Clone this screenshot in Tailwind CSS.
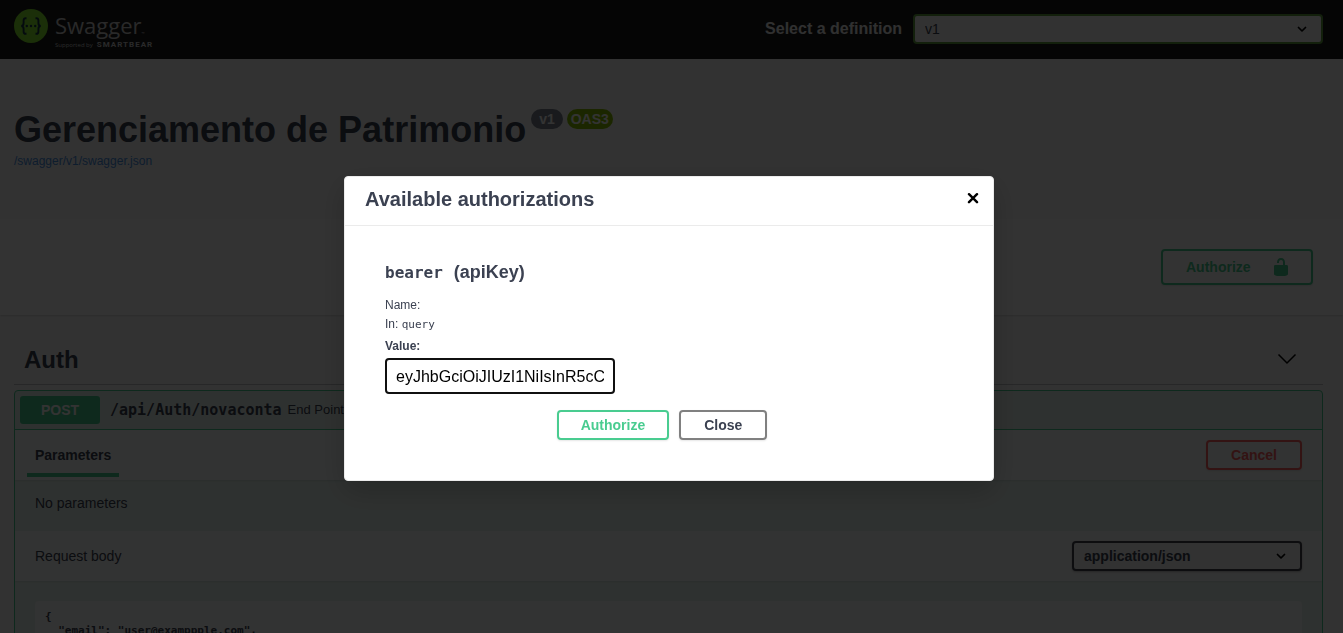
<!DOCTYPE html>
<html lang="pt-BR">
<head>
<meta charset="utf-8">
<meta name="viewport" content="width=device-width, initial-scale=1">
<title>Swagger UI</title>
<script src="https://cdn.jsdelivr.net/npm/@tailwindcss/browser@4"></script>
</head>
<body class="h-screen overflow-hidden bg-[#fafafa] font-['Liberation_Sans',Arial,sans-serif] text-sm text-[#3b4151]">
<div class="flex h-full flex-col overflow-hidden">
  <header class="flex h-[59px] shrink-0 items-center justify-between bg-[#1b1b1b] pr-5 pb-0.5 pl-3.5">
    <a href="#" class="flex items-start gap-[7px]" aria-label="Swagger, supported by SmartBear">
      <svg class="size-[34px]" viewBox="0 0 34 34" fill="none">
        <circle cx="17" cy="17" r="17" fill="#85ea2d"/>
        <path d="M12.5 9.2H11.6C9.8 9.2 9.600 10.4 9.600 11.6V14C9.600 15.8 9 17 7.200 17C9 17 9.600 18.2 9.600 20V22.4C9.600 23.6 9.800 24.8 11.6 24.8H12.5M21.5 9.2H22.4C24.2 9.2 24.4 10.4 24.4 11.6V14C24.4 15.8 25 17 26.8 17C25 17 24.4 18.2 24.4 20V22.4C24.4 23.6 24.2 24.8 22.4 24.8H21.5" stroke="#173647" stroke-width="1.900"/>
        <circle cx="12.8" cy="17" r="1.2" fill="#173647"/><circle cx="17" cy="17" r="1.2" fill="#173647"/><circle cx="21.2" cy="17" r="1.2" fill="#173647"/>
      </svg>
      <span class="flex flex-col font-['Open_Sans',sans-serif] text-[#cccccc]">
        <span class="flex items-end text-[22px] leading-8">Swagger<span class="text-[4px] leading-[14px]">™</span></span>
        <span class="flex items-center gap-1 text-[6px] leading-[8px] whitespace-nowrap"><span>Supported by</span><b class="font-['Roboto',sans-serif] text-[8px] tracking-[1px]">SMARTBEAR</b></span>
      </span>
    </a>
    <div class="flex items-center gap-[11px]">
      <label for="definition" class="text-base font-bold text-[#f0f0f0]">Select a definition</label>
      <div class="relative">
        <select id="definition" class="block h-[30px] w-[410px] appearance-none rounded border-2 border-[#62a03f] bg-[#f7f7f7] px-2.5 text-sm">
          <option>v1</option>
        </select>
        <svg class="pointer-events-none absolute top-1.5 right-3 size-[18px]" viewBox="0 0 20 20"><path stroke="#000" stroke-width=".4" d="M13.418 7.859a.695.695 0 0 1 .978 0 .68.68 0 0 1 0 .969l-3.908 3.83a.697.697 0 0 1-.979 0l-3.908-3.83a.68.68 0 0 1 0-.969.695.695 0 0 1 .978 0L10 11z"/></svg>
      </div>
    </div>
  </header>

  <section class="h-40 shrink-0 px-3.5 pt-[50px]">
    <h1 class="flex items-start gap-[5px] text-[36px] leading-[41px] font-bold">Gerenciamento de Patrimonio
      <span class="flex gap-1 text-sm leading-5 text-white"><span class="rounded-full bg-[#7d8492] px-2">v1</span><span class="rounded-full bg-[#89bf04] px-1">OAS3</span></span>
    </h1>
    <a href="#" class="block text-xs leading-[22px] text-[#4990e2]">/swagger/v1/swagger.json</a>
  </section>

  <section class="flex h-24 shrink-0 items-center justify-end bg-white pr-[30px] shadow-[0_1px_2px_0_rgba(0,0,0,0.15)]">
    <button class="flex h-9 w-[152px] items-center justify-between rounded border-2 border-[#49cc90] pr-5 pl-[23px] font-bold text-[#49cc90] shadow-[0_1px_2px_rgba(0,0,0,0.1)]">Authorize
      <svg class="size-5" viewBox="0 0 20 20" fill="currentColor"><path d="M15.8 8H14V5.6C14 2.703 12.665 1 10 1 7.334 1 6 2.703 6 5.6V6h2v-.801C8 3.754 8.797 3 10 3c1.203 0 2 .754 2 2.199V8H4c-.553 0-1 .646-1 1.199V17c0 .549.428 1.139.951 1.307l1.197.387C5.672 18.861 6.55 19 7.1 19h5.8c.549 0 1.428-.139 1.951-.307l1.196-.387c.524-.167.953-.757.953-1.306V9.199C17 8.646 16.352 8 15.8 8z"/></svg>
    </button>
  </section>

  <main class="flex min-h-0 flex-1 flex-col pt-[21px] pr-5 pl-3.5">
    <h2 class="flex h-[49px] shrink-0 items-center justify-between border-b border-[#3b4151]/30 pr-[26px] pl-2.5 text-2xl font-bold">Auth
      <svg class="size-5" viewBox="0 0 20 20" fill="none" stroke="#000" stroke-width="1.500"><path d="M1.500 4.500L10 13L18.500 4.500"/></svg>
    </h2>
    <article class="mt-[5px] flex h-[400px] shrink-0 flex-col rounded border border-[#49cc90] bg-[#49cc90]/10">
      <div class="flex h-[39px] shrink-0 items-center border-b border-[#49cc90] px-[5px]">
        <span class="flex h-7 w-20 items-center justify-center rounded-[3px] bg-[#49cc90] font-bold text-white">POST</span>
        <span class="ml-2.5 pt-0.5 font-['DejaVu_Sans_Mono',monospace] text-[15px] font-bold">/api/Auth/novaconta</span>
        <span class="ml-1.5 text-[13px] whitespace-nowrap">End Point para cadastrar uma nova conta</span>
      </div>
      <div class="flex h-[50px] shrink-0 items-center justify-between bg-white/80 pr-5 pl-3 shadow-[0_1px_2px_rgba(0,0,0,0.1)]">
        <h3 class="flex h-[47px] items-center self-start border-b-4 border-[#49cc90] px-2 pt-[7px] font-bold">Parameters</h3>
        <button class="h-[30px] w-24 rounded border-2 border-[#ff6060] font-bold text-[#ff6060] shadow-[0_1px_2px_rgba(0,0,0,0.1)]">Cancel</button>
      </div>
      <p class="h-[51px] shrink-0 px-5 pt-[13px] leading-5">No parameters</p>
      <div class="flex h-[50px] shrink-0 items-center justify-between bg-white/80 px-5 shadow-[0_1px_2px_rgba(0,0,0,0.1)]">
        <label for="media">Request body</label>
        <div class="relative">
          <select id="media" class="block h-[30px] w-[230px] appearance-none rounded border-2 border-[#41444e] bg-[#f7f7f7] px-2.5 text-sm font-bold shadow-[0_1px_2px_rgba(0,0,0,0.25)]">
            <option>application/json</option>
          </select>
          <svg class="pointer-events-none absolute top-1.5 right-3 size-[18px]" viewBox="0 0 20 20"><path stroke="#000" stroke-width=".4" d="M13.418 7.859a.695.695 0 0 1 .978 0 .68.68 0 0 1 0 .969l-3.908 3.83a.697.697 0 0 1-.979 0l-3.908-3.83a.68.68 0 0 1 0-.969.695.695 0 0 1 .978 0L10 11z"/></svg>
        </div>
      </div>
      <textarea aria-label="Request body" class="mx-5 mt-5 h-[180px] resize-none rounded bg-white/80 px-2.5 py-[9px] font-['DejaVu_Sans_Mono',monospace] text-[11px] leading-[14px] font-bold">{
  "email": "user@examppple.com",
  "password": "string"
}</textarea>
    </article>
  </main>
</div>

<div class="fixed inset-0 flex items-start justify-center bg-black/80 pt-44 pr-[5px]">
  <section role="dialog" aria-labelledby="dlg-title" class="w-[650px] rounded border border-[#ebebeb] bg-white shadow-[0_10px_30px_0_rgba(0,0,0,0.2)]">
    <header class="flex h-[49px] items-center justify-between border-b border-[#ebebeb] pr-[14px] pb-1 pl-5">
      <h2 id="dlg-title" class="text-xl font-bold">Available authorizations</h2>
      <button aria-label="Close dialog" class="flex"><svg class="size-3" viewBox="0 0 12 12" fill="none" stroke="#000" stroke-width="2.400" stroke-linecap="round"><path d="M2 1.200L10 9.200M10 1.200L2 9.200"/></svg></button>
    </header>
    <form class="px-10 pt-[34px] pb-10" onsubmit="return false">
      <h3 class="flex items-baseline gap-[11px] text-lg leading-6 font-bold"><code class="font-['DejaVu_Sans_Mono',monospace] text-base leading-6">bearer</code>(apiKey)</h3>
      <p class="mt-[11px] text-xs leading-[18px]">Name:</p>
      <p class="text-xs leading-5">In: <code class="font-['DejaVu_Sans_Mono',monospace] text-[11px]">query</code></p>
      <label for="api-key" class="block text-xs leading-[23px] font-bold">Value:</label>
      <input id="api-key" type="text" value="eyJhbGciOiJIUzI1NiIsInR5cC" class="block h-9 w-[230px] rounded border-2 border-[#101010] px-[9px] pt-0.5 text-base text-black outline-none">
      <div class="flex justify-center gap-2.5 pt-4 pr-3.5">
        <button class="h-[30px] rounded border-2 border-[#49cc90] px-[22px] font-bold text-[#49cc90] shadow-[0_1px_2px_rgba(0,0,0,0.1)]">Authorize</button>
        <button class="h-[30px] rounded border-2 border-[#808080] px-[23px] font-bold shadow-[0_1px_2px_rgba(0,0,0,0.1)]">Close</button>
      </div>
    </form>
  </section>
</div>
</body>
</html>
